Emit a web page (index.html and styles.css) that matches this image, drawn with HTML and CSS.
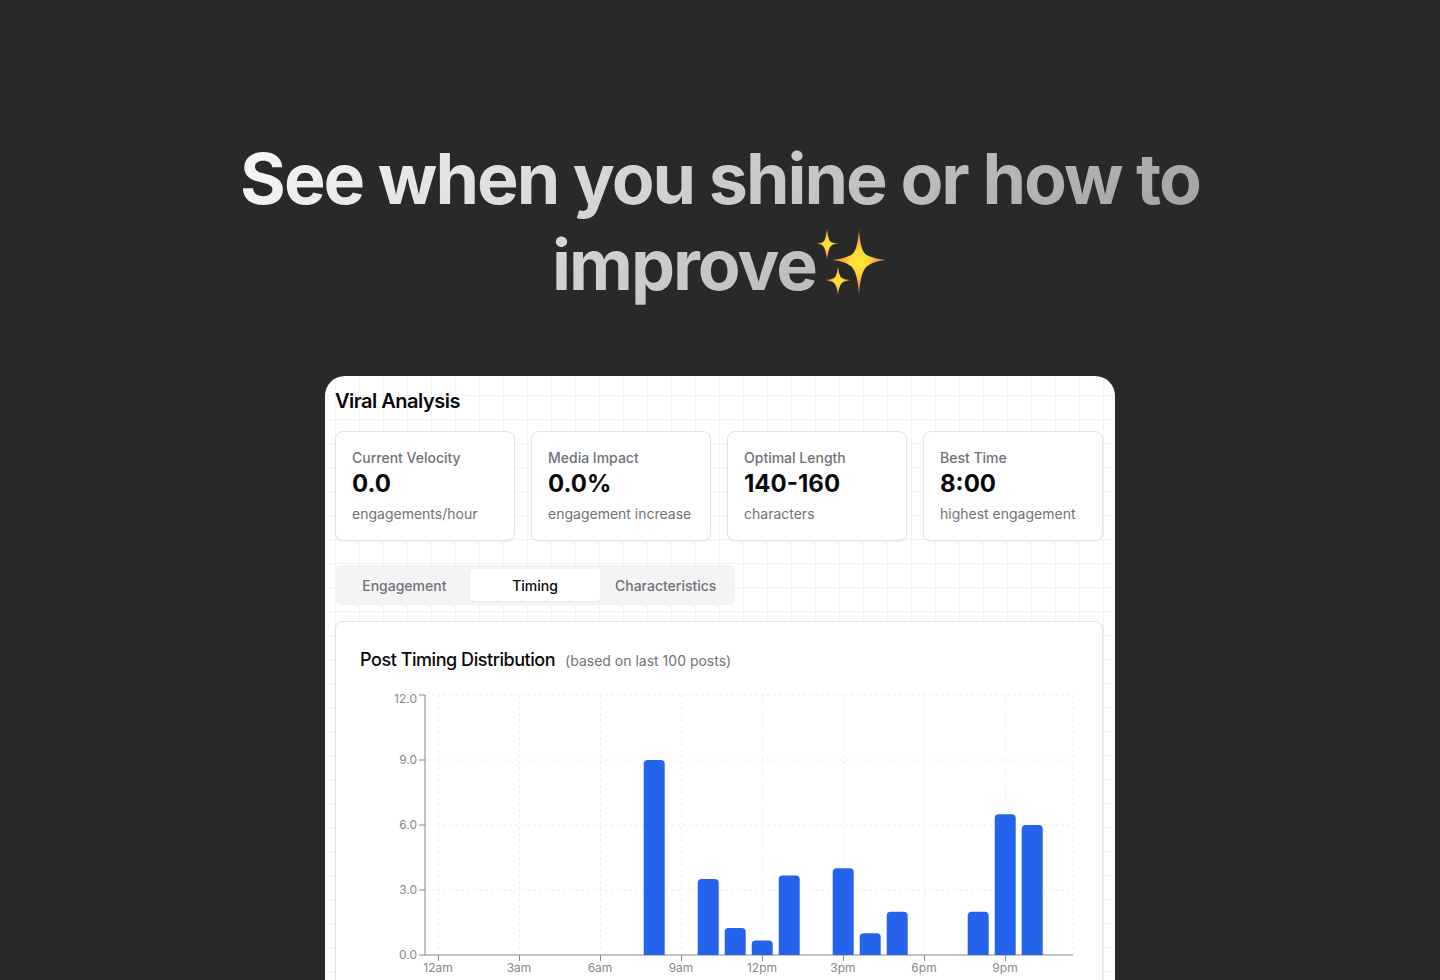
FILE: index.html
```html
<!DOCTYPE html>
<html lang="en">
<head>
    <meta charset="UTF-8">
    <meta name="viewport" content="width=device-width, initial-scale=1.0">
    <title>Viral Analysis</title>
    <link rel="stylesheet" href="styles.css">
</head>
<body>
    <main class="hero">
        <h1 class="headline">See when you shine or how to improve<svg class="sparkles" viewBox="0 0 72 72" aria-hidden="true">
            <defs>
                <radialGradient id="gold">
                    <stop offset="0" stop-color="#ffe838"/>
                    <stop offset="0.35" stop-color="#ffd935"/>
                    <stop offset="0.65" stop-color="#f9a93a"/>
                    <stop offset="1" stop-color="#c4632c"/>
                </radialGradient>
            </defs>
            <path fill="url(#gold)" d="M43 3C44.500 22 47 28 53 30C57 32 63 33 70 34C63 35 57 36 53 39C47 42 44.500 50 43 68C41.500 50 39 42 33 39C29 36 23 35 16 34C23 33 29 32 33 30C39 28 41.500 22 43 3Z"/>
            <path fill="url(#gold)" d="M11 2C12 11 13 15 15 16C17 17 19 17 23 17C19 18 17 18 15 20C13 22 12 26 11 34C10 26 9 22 7 20C5 18 3 18 0 17C3 17 5 17 7 16C9 15 10 11 11 2Z"/>
            <path fill="url(#gold)" d="M22 40C23 48 24 51 26 52C28 53 31 54 35 54C31 55 28 55 26 57C24 59 23 62 22 69C21 62 20 59 18 57C16 55 13 55 9 54C13 54 16 53 18 52C20 51 21 48 22 40Z"/>
        </svg></h1>

        <section class="panel">
            <h2 class="panel-title">Viral Analysis</h2>

            <div class="stats">
                <div class="card stat">
                    <p class="stat-label">Current Velocity</p>
                    <p class="stat-value">0.0</p>
                    <p class="stat-note">engagements/hour</p>
                </div>
                <div class="card stat">
                    <p class="stat-label">Media Impact</p>
                    <p class="stat-value">0.0%</p>
                    <p class="stat-note">engagement increase</p>
                </div>
                <div class="card stat">
                    <p class="stat-label">Optimal Length</p>
                    <p class="stat-value">140-160</p>
                    <p class="stat-note">characters</p>
                </div>
                <div class="card stat">
                    <p class="stat-label">Best Time</p>
                    <p class="stat-value">8:00</p>
                    <p class="stat-note">highest engagement</p>
                </div>
            </div>

            <div class="tabs" role="tablist">
                <button class="tab" type="button" role="tab" aria-selected="false">Engagement</button>
                <button class="tab active" type="button" role="tab" aria-selected="true">Timing</button>
                <button class="tab" type="button" role="tab" aria-selected="false">Characteristics</button>
            </div>

            <div class="card chart-card">
                <div class="chart-head">
                    <h3 class="chart-title">Post Timing Distribution</h3>
                    <span class="chart-note">(based on last 100 posts)</span>
                </div>
                <svg class="chart" viewBox="0 0 718 300" role="img" aria-label="Posts by hour of day">
                    <g class="grid">
                        <path d="M65 5H713M65 70H713M65 135H713M65 200H713"/>
                        <path d="M78.500 5V265M159.500 5V265M240.500 5V265M321.500 5V265M402.500 5V265M483.500 5V265M564.500 5V265M645.500 5V265M713 5V265"/>
                    </g>
                    <g class="axis">
                        <path d="M65 5V265M59 5H65M59 70H65M59 135H65M59 200H65M59 265H65"/>
                        <path d="M65 265H713"/>
                        <path d="M78.500 265V271M159.500 265V271M240.500 265V271M321.500 265V271M402.500 265V271M483.500 265V271M564.500 265V271M645.500 265V271"/>
                    </g>
                    <g class="bars">
                        <path d="M283.700 265V74q0-4 4-4h13q4 0 4 4V265z"/>
                        <path d="M337.700 265V193q0-4 4-4h13q4 0 4 4V265z"/>
                        <path d="M364.700 265V242q0-4 4-4h13q4 0 4 4V265z"/>
                        <path d="M391.700 265V254.500q0-4 4-4h13q4 0 4 4V265z"/>
                        <path d="M418.700 265V189.500q0-4 4-4h13q4 0 4 4V265z"/>
                        <path d="M472.700 265V182.300q0-4 4-4h13q4 0 4 4V265z"/>
                        <path d="M499.700 265V247.300q0-4 4-4h13q4 0 4 4V265z"/>
                        <path d="M526.700 265V225.700q0-4 4-4h13q4 0 4 4V265z"/>
                        <path d="M607.700 265V225.700q0-4 4-4h13q4 0 4 4V265z"/>
                        <path d="M634.700 265V128.200q0-4 4-4h13q4 0 4 4V265z"/>
                        <path d="M661.700 265V139q0-4 4-4h13q4 0 4 4V265z"/>
                    </g>
                    <g class="y-labels">
                        <text x="57" y="13">12.0</text>
                        <text x="57" y="74">9.0</text>
                        <text x="57" y="139">6.0</text>
                        <text x="57" y="204">3.0</text>
                        <text x="57" y="269">0.0</text>
                    </g>
                    <g class="x-labels">
                        <text x="78" y="282">12am</text>
                        <text x="159" y="282">3am</text>
                        <text x="240" y="282">6am</text>
                        <text x="321" y="282">9am</text>
                        <text x="402" y="282">12pm</text>
                        <text x="483" y="282">3pm</text>
                        <text x="564" y="282">6pm</text>
                        <text x="645" y="282">9pm</text>
                    </g>
                </svg>
            </div>
        </section>
    </main>
</body>
</html>
```
FILE: styles.css
```css
* {
    box-sizing: border-box;
}
html {
    height: 100%;
}
body {
    margin: 0;
    height: 100%;
    overflow: hidden;
    background: #292929;
    color: #09090b;
    font-family: Inter, "Liberation Sans", sans-serif;
}
h1, h2, h3, p {
    margin: 0;
}
.hero {
    display: flex;
    flex-direction: column;
    align-items: center;
    padding: 136px 16px 0;
}
.headline {
    max-width: 1024px;
    font-size: 70px;
    line-height: 86px;
    font-weight: 700;
    letter-spacing: -2px;
    text-align: center;
    background: linear-gradient(135deg, #fafafa, #999999);
    -webkit-background-clip: text;
    background-clip: text;
    color: transparent;
}
.sparkles {
    width: 72px;
    height: 72px;
    vertical-align: -8px;
}
.panel {
    width: 100%;
    max-width: 790px;
    margin-top: 68px;
    padding: 11px 12px 24px 10px;
    border-radius: 20px 20px 0 0;
    background-color: #ffffff;
    background-image:
        linear-gradient(to right, #f3f3f3 1px, transparent 1px),
        linear-gradient(to bottom, #f3f3f3 1px, transparent 1px);
    background-size: 24px 24px;
    background-position: 10px 19px;
}
.panel-title {
    font-size: 20px;
    line-height: 28px;
    font-weight: 600;
    letter-spacing: -0.025em;
}
.card {
    background: #ffffff;
    border: 1px solid #e4e4e7;
    border-radius: 8px;
    box-shadow: 0 1px 2px rgba(0, 0, 0, 0.05);
}
.stats {
    display: grid;
    grid-template-columns: repeat(4, 1fr);
    gap: 16px;
    margin-top: 16px;
}
.stat {
    padding: 16px;
}
.stat-label,
.stat-note,
.chart-note {
    font-size: 14px;
    line-height: 20px;
    color: #71717a;
}
.stat-label {
    font-weight: 500;
}
.stat-value {
    font-size: 24px;
    line-height: 32px;
    font-weight: 700;
}
.stat-note {
    margin-top: 4px;
}
.tabs {
    display: grid;
    grid-template-columns: repeat(3, 1fr);
    max-width: 400px;
    margin-top: 24px;
    padding: 4px;
    border-radius: 6px;
    background: #f4f4f5;
}
.tab {
    height: 32px;
    padding: 0;
    border: none;
    border-radius: 4px;
    background: transparent;
    color: #71717a;
    font-family: inherit;
    font-size: 14px;
    font-weight: 500;
    cursor: pointer;
}
.tab.active {
    background: #ffffff;
    color: #09090b;
    box-shadow: 0 1px 2px rgba(0, 0, 0, 0.05);
}
.chart-card {
    margin-top: 16px;
    padding: 24px;
}
.chart-head {
    display: flex;
    align-items: baseline;
    gap: 10px;
}
.chart-title {
    font-size: 18px;
    line-height: 28px;
    font-weight: 500;
    letter-spacing: -0.025em;
}
.chart {
    display: block;
    width: 100%;
    margin-top: 16px;
}
.grid path {
    fill: none;
    stroke: #eeeeee;
    stroke-dasharray: 3 3;
}
.axis path {
    fill: none;
    stroke: #888888;
}
.bars path {
    fill: #2563eb;
}
.y-labels,
.x-labels {
    font-size: 12px;
    fill: #888888;
}
.y-labels {
    text-anchor: end;
}
.x-labels {
    text-anchor: middle;
}
```
